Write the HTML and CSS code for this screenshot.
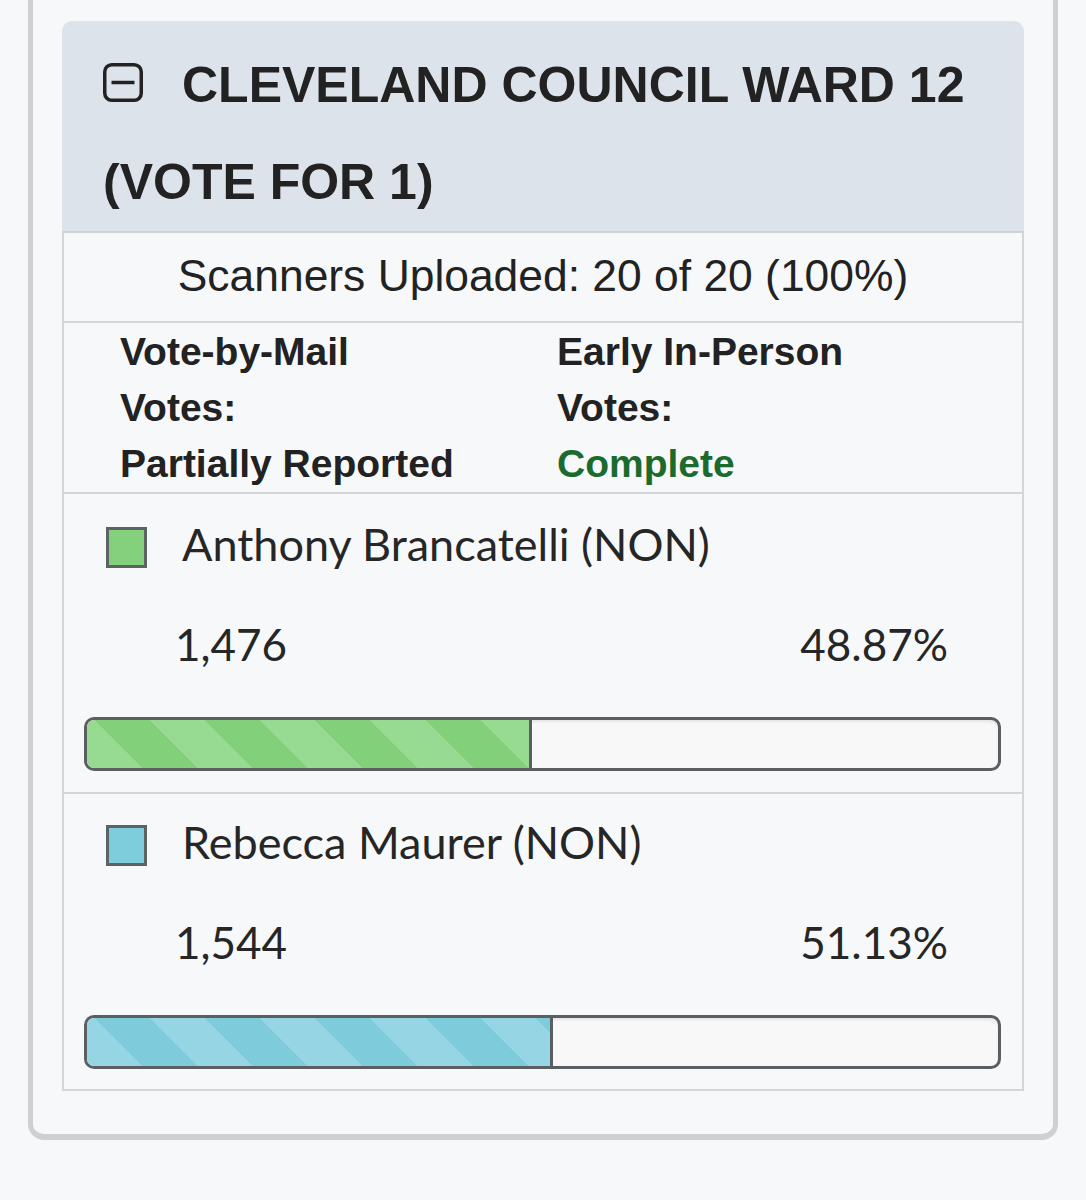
FILE: index.html
```html
<!DOCTYPE html>
<html lang="en">
<head>
<meta charset="utf-8">
<title>Cleveland Council Ward 12</title>
<link rel="stylesheet" href="styles.css">
</head>
<body>
<div class="card">
  <div class="contest-head">
    <h2 class="contest-title"><svg class="collapse-icon" width="40" height="39" viewBox="0 0 40 39"><rect x="1.75" y="1.75" width="36.5" height="35.5" rx="7" fill="none" stroke="#222" stroke-width="3.5"/><line x1="8.5" y1="19.5" x2="31.5" y2="19.5" stroke="#222" stroke-width="3.5"/></svg>CLEVELAND COUNCIL WARD 12 (VOTE FOR 1)</h2>
  </div>
  <div class="contest-body">
    <div class="scanners">Scanners Uploaded: 20 of 20 (100%)</div>
    <div class="status">
      <div class="status-col">Vote-by-Mail Votes:<br><span>Partially Reported</span></div>
      <div class="status-col">Early In-Person Votes:<br><span class="complete">Complete</span></div>
    </div>
    <div class="cand">
      <div class="name-line"><span class="swatch green"></span><span class="name">Anthony Brancatelli (NON)</span></div>
      <div class="nums"><span>1,476</span><span>48.87%</span></div>
      <div class="bar"><div class="fill green-fill" style="width:48.87%"></div></div>
    </div>
    <div class="cand">
      <div class="name-line"><span class="swatch blue"></span><span class="name">Rebecca Maurer (NON)</span></div>
      <div class="nums"><span>1,544</span><span>51.13%</span></div>
      <div class="bar"><div class="fill blue-fill" style="width:51.13%"></div></div>
    </div>
  </div>
</div>
</body>
</html>
```
FILE: styles.css
```css
html, body {
  margin: 0;
  padding: 0;
  background: #f7f8fa;
}
body {
  font-family: "Liberation Sans", Arial, sans-serif;
  color: #222;
}
.card {
  box-sizing: border-box;
  width: 1030px;
  margin-left: 28px;
  padding: 21px 29px 43px 29px;
  border: 5px solid #cfd0d2;
  border-top: 0;
  border-bottom-width: 6px;
  border-radius: 0 0 16px 16px;
  background: #f7f8fa;
}
.contest-head {
  background: #dde3eb;
  border-radius: 10px 10px 0 0;
  padding: 16px 40px 0 41px;
}
.contest-title {
  margin: 0;
  font-size: 50px;
  font-weight: bold;
  line-height: 97px;
  color: #222;
}
.collapse-icon {
  margin-right: 39px;
}
.contest-body {
  border: 2px solid #d3d5d8;
  border-top-color: #cfd2d6;
}
.scanners {
  font-size: 44.4px;
  line-height: 52px;
  text-align: center;
  padding: 17px 0 19px;
  border-bottom: 2px solid #d3d5d8;
}
.status {
  display: grid;
  grid-template-columns: 350px 350px;
  column-gap: 87px;
  padding: 1px 0 0 56px;
  font-size: 39px;
  font-weight: bold;
  line-height: 56px;
  border-bottom: 2px solid #d3d5d8;
}
.complete {
  color: #1b6a2e;
}
.cand {
  font-family: Lato, "Liberation Sans", sans-serif;
  padding: 33px 21px 21px 20px;
  border-bottom: 2px solid #d3d5d8;
}
.cand:last-child {
  border-bottom: 0;
  padding-top: 31px;
  padding-bottom: 20px;
}
.name-line {
  display: flex;
  align-items: center;
  height: 40px;
  padding-left: 22px;
}
.swatch {
  box-sizing: border-box;
  width: 41px;
  height: 41px;
  border: 3px solid #5d6264;
  margin-right: 35px;
}
.swatch.green { background: #83d17c; }
.swatch.blue { background: #7ecddc; }
.name {
  font-size: 45px;
  line-height: 40px;
  margin-bottom: 6px;
  color: #262626;
}
.nums {
  display: flex;
  justify-content: space-between;
  margin-top: 51px;
  padding: 0 53px 0 91px;
  font-size: 44px;
  line-height: 52px;
  color: #262626;
}
.bar {
  box-sizing: border-box;
  margin-top: 47px;
  height: 54px;
  border: 3px solid #5c5f61;
  border-radius: 10px;
  background: #f8f8f8;
  box-shadow: inset 0 2px 3px rgba(0,0,0,0.08);
  overflow: hidden;
}
.fill {
  box-sizing: border-box;
  height: 100%;
  border-right: 3px solid #5c5f61;
}
.green-fill {
  background: repeating-linear-gradient(45deg, #97da91 0 39px, #82d07a 39px 78px);
}
.blue-fill {
  background: repeating-linear-gradient(45deg, #96d6e4 0 39px, #7ecbdc 39px 78px);
}
```
